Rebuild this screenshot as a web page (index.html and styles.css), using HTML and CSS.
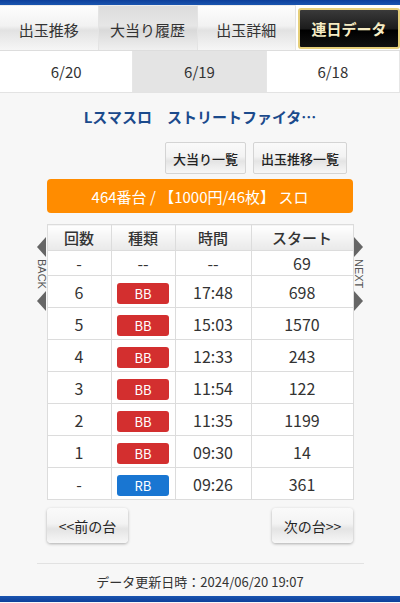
FILE: index.html
```html
<!DOCTYPE html>
<html lang="ja">
<head>
    <meta charset="UTF-8">
    <meta name="viewport" content="width=device-width, initial-scale=1.0">
    <title>大当り履歴</title>
    <link rel="stylesheet" href="styles.css">
</head>
<body>
    <div class="topbar"></div>
    <nav class="tabs">
        <a class="tab">出玉推移</a>
        <a class="tab active">大当り履歴</a>
        <a class="tab">出玉詳細</a>
        <a class="tab special">連日データ</a>
    </nav>
    <nav class="dates">
        <a class="date">6/20</a>
        <a class="date active">6/19</a>
        <a class="date">6/18</a>
    </nav>

    <main class="content">
        <h1 class="machine">Lスマスロ　ストリートファイタ…</h1>
        <div class="links">
            <button class="btn">大当り一覧</button>
            <button class="btn">出玉推移一覧</button>
        </div>
        <div class="unit">464番台 / 【1000円/46枚】 スロ</div>

        <div class="history">
            <div class="side back">
                <span class="tri left"></span>
                <span class="label">BACK</span>
                <span class="tri left"></span>
            </div>
            <table class="hits">
                <thead>
                    <tr><th class="c1">回数</th><th class="c2">種類</th><th class="c3">時間</th><th class="c4">スタート</th></tr>
                </thead>
                <tbody>
                    <tr class="first"><td>-</td><td>--</td><td>--</td><td>69</td></tr>
                    <tr><td>6</td><td><span class="badge bb">BB</span></td><td>17:48</td><td>698</td></tr>
                    <tr><td>5</td><td><span class="badge bb">BB</span></td><td>15:03</td><td>1570</td></tr>
                    <tr><td>4</td><td><span class="badge bb">BB</span></td><td>12:33</td><td>243</td></tr>
                    <tr><td>3</td><td><span class="badge bb">BB</span></td><td>11:54</td><td>122</td></tr>
                    <tr><td>2</td><td><span class="badge bb">BB</span></td><td>11:35</td><td>1199</td></tr>
                    <tr><td>1</td><td><span class="badge bb">BB</span></td><td>09:30</td><td>14</td></tr>
                    <tr><td>-</td><td><span class="badge rb">RB</span></td><td>09:26</td><td>361</td></tr>
                </tbody>
            </table>
            <div class="side next">
                <span class="tri right"></span>
                <span class="label">NEXT</span>
                <span class="tri right"></span>
            </div>
        </div>

        <div class="pager">
            <button class="btn big">&lt;&lt;前の台</button>
            <button class="btn big">次の台&gt;&gt;</button>
        </div>

        <div class="updated">データ更新日時：2024/06/20 19:07</div>
    </main>
    <div class="bottombar"></div>
</body>
</html>
```

FILE: styles.css
```css
body {
    margin: 0;
    font-family: "Noto Sans CJK JP", "Noto Sans", sans-serif;
    background-color: #f7f7f7;
    color: #333;
}
.topbar {
    height: 5px;
    background: linear-gradient(#0d3f9a, #1a55b0);
}
.tabs {
    display: flex;
    height: 45px;
    background: #fff;
}
.tab {
    flex: 1;
    display: flex;
    align-items: center;
    justify-content: center;
    padding-top: 2px;
    font-size: 15px;
    color: #333;
    background: linear-gradient(#fdfdfd 0%, #f2f2f2 45%, #e2e2e2 55%, #f6f6f6 100%);
    border-right: 1px solid #e4e4e4;
    border-top: 1px solid #ececec;
}
.tab.active {
    background: linear-gradient(#dcdcdc 0%, #e6e6e6 45%, #d9d9d9 55%, #f0f0f0 100%);
}
.tab.special {
    margin: 3px 0 1px 2px;
    padding-top: 0;
    border: 2px solid #e6cf7a;
    border-radius: 3px;
    background: linear-gradient(#3a3a3a 0%, #1c1c1c 50%, #000 55%, #111 100%);
    color: #f6ecc4;
    font-weight: bold;
}
.dates {
    display: flex;
    height: 41px;
    border-top: 1px solid #ddd;
    border-bottom: 1px solid #e3e3e3;
    background: #fff;
}
.date {
    flex: 1;
    display: flex;
    align-items: center;
    justify-content: center;
    font-size: 15px;
    color: #333;
    border-right: 1px solid #e6e6e6;
}
.date.active {
    background: #e4e4e4;
}
.content {
    padding-top: 13px;
}
.machine {
    margin: 0;
    text-align: center;
    font-size: 15px;
    line-height: 22px;
    color: #1b4a8c;
    font-weight: bold;
}
.links {
    display: flex;
    justify-content: flex-end;
    gap: 7px;
    width: 294px;
    margin: 14px auto 0 53px;
}
.btn {
    font-family: inherit;
    font-size: 13px;
    color: #222;
    border: 1px solid #d4d4d4;
    border-radius: 2px;
    background: linear-gradient(#fafafa 0%, #f3f3f3 45%, #e4e4e4 60%, #f7f7f7 100%);
    height: 32px;
    padding: 0 7px;
    font-weight: 500;
}
.unit {
    width: 306px;
    height: 34px;
    margin: 5px auto 0;
    background: #ff8c00;
    border-radius: 4px;
    color: #fff;
    font-size: 15px;
    display: flex;
    align-items: center;
    justify-content: center;
}
.history {
    display: flex;
    justify-content: center;
    margin-top: 11px;
}
.side {
    width: 10px;
    display: flex;
    flex-direction: column;
    align-items: center;
    padding-top: 13px;
    color: #555;
}
.label {
    writing-mode: vertical-rl;
    font-family: "Liberation Sans", sans-serif;
    font-size: 11px;
    line-height: 10px;
    height: 34px;
    text-align: center;
}
.tri {
    width: 0;
    height: 0;
    border-top: 10px solid transparent;
    border-bottom: 10px solid transparent;
}
.tri.left {
    border-right: 9px solid #666;
}
.tri.right {
    border-left: 9px solid #666;
}
.hits {
    width: 307px;
    border-collapse: collapse;
    background: #fff;
    text-align: center;
    font-size: 16px;
}
.hits th, .hits td {
    border: 1px solid #dcdcdc;
    padding: 0;
    font-weight: normal;
}
.hits th {
    height: 25px;
    font-size: 15px;
    font-weight: 500;
    background: linear-gradient(#ffffff, #e9e9e9);
}
.c1 { width: 63px; }
.c2 { width: 63px; }
.c3 { width: 75px; }
.hits td {
    height: 31px;
}
.hits tr.first td {
    height: 24px;
}
.badge {
    display: inline-block;
    width: 52px;
    height: 21px;
    line-height: 21px;
    border-radius: 3px;
    color: #fff;
    font-size: 13px;
    vertical-align: middle;
}
.bb { background: #d32f2f; }
.rb { background: #1976d2; }
.pager {
    display: flex;
    justify-content: space-between;
    width: 306px;
    margin: 8px auto 0;
}
.btn.big {
    width: 81px;
    height: 35px;
    font-size: 14px;
    border: none;
    border-radius: 4px;
    box-shadow: 0 1px 3px rgba(0, 0, 0, 0.3);
    padding: 0;
    font-weight: normal;
}
.updated {
    width: 327px;
    margin: 20px auto 0;
    border-top: 1px solid #e2e2e2;
    padding-top: 8px;
    text-align: center;
    font-size: 13px;
    line-height: 19px;
    height: 24px;
}
.bottombar {
    height: 6px;
    background: linear-gradient(#1a55b0, #0d3f9a);
}
```
